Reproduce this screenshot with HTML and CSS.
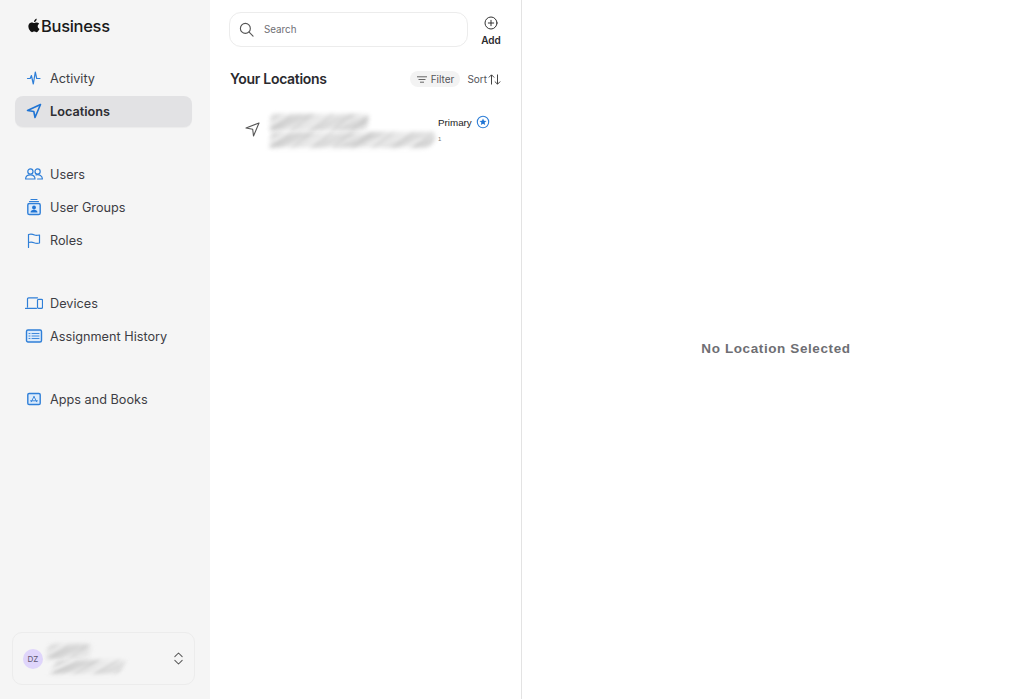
FILE: index.html
```html
<!DOCTYPE html>
<html lang="en">
<head>
<meta charset="utf-8">
<title>Apple Business</title>
<link rel="stylesheet" href="styles.css">
</head>
<body>
<div class="app">
  <aside class="sidebar">
    <div class="brand">
      <svg class="apple" viewBox="0 0 170 200" aria-hidden="true"><path d="M150 170c-8 12-17 24-30 24s-17-8-32-8-20 8-32 8-22-12-31-25C6 143-3 102 15 78c9-13 24-21 40-21 12 0 24 8 32 8s21-9 36-8c6 0 24 2 35 18-1 1-21 12-21 36 0 28 25 38 25 38s-4 11-12 21zM113 36c7-8 11-19 10-30-10 0-21 7-28 15-6 7-12 18-10 29 11 1 21-6 28-14z"/></svg>
      <span class="brand-name">Business</span>
    </div>
    <nav class="nav">
      <div class="nav-group">
        <a class="nav-item"><svg class="ico" viewBox="0 0 18 18"><path d="M2.500 9.500h2.700l1.200-3 1.900 8.500 2-12 1.400 6.500h3.300"/></svg>Activity</a>
        <a class="nav-item active"><svg class="ico" viewBox="0 0 18 18"><path class="thick" d="M15.500 2.500 2.500 8.500l6.300 1L10 15.500z"/></svg>Locations</a>
      </div>
      <div class="nav-group">
        <a class="nav-item"><svg class="ico" viewBox="0 0 18 18"><circle cx="5.400" cy="6.400" r="2.600"/><circle cx="12.600" cy="6.400" r="2.600"/><path d="M.6 14c0-3 2-4.200 4.800-4.200S10 11 10 14zM11 9.800c3.500-.6 6.400 1 6.400 4.200h-4.800"/></svg>Users</a>
        <a class="nav-item"><svg class="ico" viewBox="0 0 18 18"><rect class="tint" x="2.800" y="5.500" width="12.400" height="11" rx="1.600"/><path d="M4.500 3.500h9M6 1.500h6"/><circle class="fill" cx="9" cy="9.500" r="1.900"/><path class="fill" d="M5.500 14.500c0-2 1.500-2.800 3.500-2.800s3.500.8 3.500 2.800z"/></svg>User Groups</a>
        <a class="nav-item"><svg class="ico" viewBox="0 0 18 18"><path d="M3.500 16.500V3.500c3-1 5 0 6 .5s3 .5 5 0v8c-2 .5-4 .3-5.500-.3s-3.500-.7-5.500-.2"/></svg>Roles</a>
      </div>
      <div class="nav-group">
        <a class="nav-item"><svg class="ico" viewBox="0 0 18 18"><path d="M2.500 13V5a1.200 1.200 0 0 1 1.200-1.200h8.800M.5 14.300h11"/><rect x="12.500" y="5.300" width="5" height="9" rx="1"/></svg>Devices</a>
        <a class="nav-item"><svg class="ico" viewBox="0 0 18 18"><rect class="tint" x="1.500" y="3" width="15" height="12" rx="1.500"/><path d="M4 6.500h1M7 6.500h7M4 9h1M7 9h7M4 11.500h1M7 11.500h7" class="thin"/></svg>Assignment History</a>
      </div>
      <div class="nav-group">
        <a class="nav-item"><svg class="ico" viewBox="0 0 18 18"><rect class="tint" x="2.800" y="3.500" width="12.400" height="11" rx="1.300"/><path class="thin" d="M9 6.500 6.300 11.800M9 6.500l2.700 5.300M5.500 10.800h7"/></svg>Apps and Books</a>
      </div>
    </nav>
    <div class="account">
      <span class="avatar">DZ</span>
      <div class="account-blur">
        <span class="smear smear-a"></span>
        <span class="smear smear-b"></span>
      </div>
      <svg class="chevrons" viewBox="0 0 12 16"><path d="M2 6 6 2l4 4M2 10l4 4 4-4"/></svg>
    </div>
  </aside>

  <section class="list-pane">
    <div class="search-row">
      <div class="search">
        <svg class="search-ico" viewBox="0 0 16 16"><circle cx="6.800" cy="6.800" r="5.300"/><path d="m10.800 10.800 4.200 4.200"/></svg>
        <span class="search-text">Search</span>
      </div>
      <div class="add">
        <svg class="add-ico" viewBox="0 0 14 14"><circle cx="7" cy="7" r="6"/><path d="M7 4.300v5.400M4.300 7h5.400"/></svg>
        <span>Add</span>
      </div>
    </div>
    <div class="list-head">
      <h2>Your Locations</h2>
      <div class="tools">
        <span class="filter"><svg class="filter-ico" viewBox="0 0 10 7"><path d="M0 .8h10M1.500 3.500h7M3 6.200h4"/></svg>Filter</span>
        <span class="sort">Sort<svg class="sort-ico" viewBox="0 0 13 11"><path d="M3.500 10.500V1M.8 3.500 3.500.8l2.700 2.700M9.500.5V10M6.800 7.500l2.700 2.700 2.700-2.700"/></svg></span>
      </div>
    </div>
    <div class="loc-row">
      <svg class="loc-ico" viewBox="0 0 16 16"><path d="M15 2 2 7l6.700 1.300L9.500 15z"/></svg>
      <div class="loc-blur">
        <span class="smear smear-c"></span>
        <span class="smear smear-d"></span>
      </div>
      <div class="primary-col">
        <div class="primary">
          <span>Primary</span>
          <svg class="star" viewBox="0 0 14 14"><circle cx="7" cy="7" r="5.700"/><path class="star-fill" d="m7 3.500 1 2.300 2.500.2-1.900 1.600.6 2.400L7 8.700 4.800 10l.6-2.400L3.500 6l2.500-.2z"/></svg>
        </div>
        <span class="stray">1</span>
      </div>
    </div>
  </section>

  <main class="detail">No Location Selected</main>
</div>
</body>
</html>
```
FILE: styles.css
```css
* { box-sizing: border-box; }
html, body { margin: 0; height: 100%; }
body { font-family: Inter, "Liberation Sans", sans-serif; color: #1d1d1f; background: #fff; }
.app { display: flex; height: 699px; overflow: hidden; }

.sidebar { width: 210px; flex: none; background: #f5f5f5; display: flex; flex-direction: column; padding: 0 15px 14px 12px; }
.brand { display: flex; align-items: center; gap: 1px; height: 61px; padding: 0 0 9px 16px; }
.apple { width: 12px; height: 15px; fill: #111; margin-bottom: 1px; }
.brand-name { font-size: 16.500px; font-weight: 500; letter-spacing: -.3px; color: #1a1a1a; }
.nav { flex: 1; display: flex; flex-direction: column; gap: 30px; margin-right: 3px; }
.nav-item { display: flex; align-items: center; gap: 7px; height: 33px; padding: 1px 0 0 10px; margin-left: 3px; font-size: 12.700px; color: #3d3d44; border-radius: 8px; }
.nav-item.active { height: 31px; margin-top: 2px; padding-top: 0; padding-bottom: 1px; background: #e2e2e4; font-weight: 600; color: #2e2e33; box-shadow: 0 1px 1px rgba(0,0,0,.04); }
.ico { width: 18px; height: 18px; flex: none; fill: none; stroke: #2f7fd8; stroke-width: 1.200; stroke-linejoin: round; stroke-linecap: round; }
.ico .thick { stroke-width: 1.600; stroke: #1f74d4; }
.ico .fill { fill: #1f74d4; stroke: none; }
.ico .tint { fill: #dcebfb; stroke-width: 1.400; }
.ico .thin { stroke-width: .9; }

.account { height: 53px; border: 1px solid #ececec; border-radius: 10px; display: flex; align-items: center; padding: 0 10px; gap: 4px; }
.avatar { width: 20px; height: 20px; border-radius: 50%; background: #dfd5fb; color: #5d5670; font-size: 8px; display: flex; align-items: center; justify-content: center; flex: none; }
.account-blur { flex: 1; display: flex; flex-direction: column; gap: 1px; }
.smear { display: block; filter: blur(2px); background: repeating-linear-gradient(140deg, rgba(165,165,165,.45) 0 2px, transparent 2px 5px, rgba(185,185,185,.35) 5px 6px, transparent 6px 13px), repeating-linear-gradient(155deg, #dedede 0 7px, #efefef 7px 11px, #d8d8d8 11px 19px, #ebebeb 19px 31px); }
.smear-a { width: 44px; height: 15px; transform: skewX(-12deg); border-radius: 5px 7px 4px 4px; }
.smear-b { width: 70px; height: 14px; transform: skewX(-30deg) translateX(6px); border-radius: 4px; }
.chevrons { width: 11px; height: 15px; flex: none; fill: none; stroke: #555; stroke-width: 1.100; stroke-linecap: round; stroke-linejoin: round; }

.list-pane { width: 312px; flex: none; border-right: 1px solid #e3e3e3; padding: 12px 20px 0 19px; }
.search-row { display: flex; align-items: flex-start; gap: 13px; }
.search { width: 239px; height: 35px; border: 1px solid #ececec; border-radius: 12px; display: flex; align-items: center; padding-left: 9px; gap: 10px; flex: none; }
.search-ico { width: 15px; height: 15px; margin-bottom: 1px; fill: none; stroke: #555; stroke-width: 1.200; stroke-linecap: round; }
.search-text { font-size: 9.800px; color: #6e6e73; }
.add { display: flex; flex-direction: column; align-items: center; width: 22px; gap: 4px; font-size: 10px; font-weight: 600; color: #2a2a2e; padding-top: 4px; }
.add-ico { width: 14px; height: 14px; flex: none; fill: none; stroke: #333; stroke-width: 1; stroke-linecap: round; }
.list-head { display: flex; align-items: center; justify-content: space-between; margin-top: 24px; padding-left: 1px; height: 16px; }
.list-head h2 { margin: 0 0 2px; font-size: 14px; font-weight: 600; color: #2a2a2e; letter-spacing: -.3px; }
.tools { display: flex; align-items: center; gap: 7px; font-size: 10px; color: #55555a; }
.filter { display: flex; align-items: center; gap: 4px; height: 16px; padding: 0 6px 0 7px; background: #f3f3f3; border-radius: 8px; }
.filter-ico { width: 10px; height: 7px; fill: none; stroke: #666; stroke-width: 1; }
.sort { display: flex; align-items: center; gap: 1px; }
.sort-ico { width: 13px; height: 11px; fill: none; stroke: #444; stroke-width: 1; }

.loc-row { display: flex; align-items: flex-start; margin-top: 27px; padding-left: 15px; }
.loc-ico { width: 16px; height: 16px; margin-top: 7px; flex: none; fill: none; stroke: #555; stroke-width: 1.100; stroke-linejoin: round; }
.loc-blur { width: 168px; margin-left: 10px; flex: none; display: flex; flex-direction: column; gap: 1px; }
.smear-c { width: 98px; height: 17px; transform: skewX(-6deg); border-radius: 4px; }
.smear-d { width: 165px; height: 16px; transform: skewX(-8deg); border-radius: 3px 5px 10px 3px; }
.primary-col { display: flex; flex-direction: column; font-family: "Liberation Sans", sans-serif; font-size: 9.800px; color: #222; }
.primary { display: flex; align-items: center; gap: 4px; margin-top: 1px; }
.stray { font-size: 6px; line-height: 1; margin-top: 7px; color: #777; }
.star { width: 14px; height: 14px; fill: none; stroke: #2f7fd8; stroke-width: 1.100; }
.star-fill { fill: #1f74d4; stroke: none; }

.detail { flex: 1; display: flex; align-items: center; justify-content: center; font-family: "Liberation Sans", sans-serif; font-size: 13.500px; font-weight: 700; letter-spacing: .6px; color: #6e6e73; padding-bottom: 2px; }
```
